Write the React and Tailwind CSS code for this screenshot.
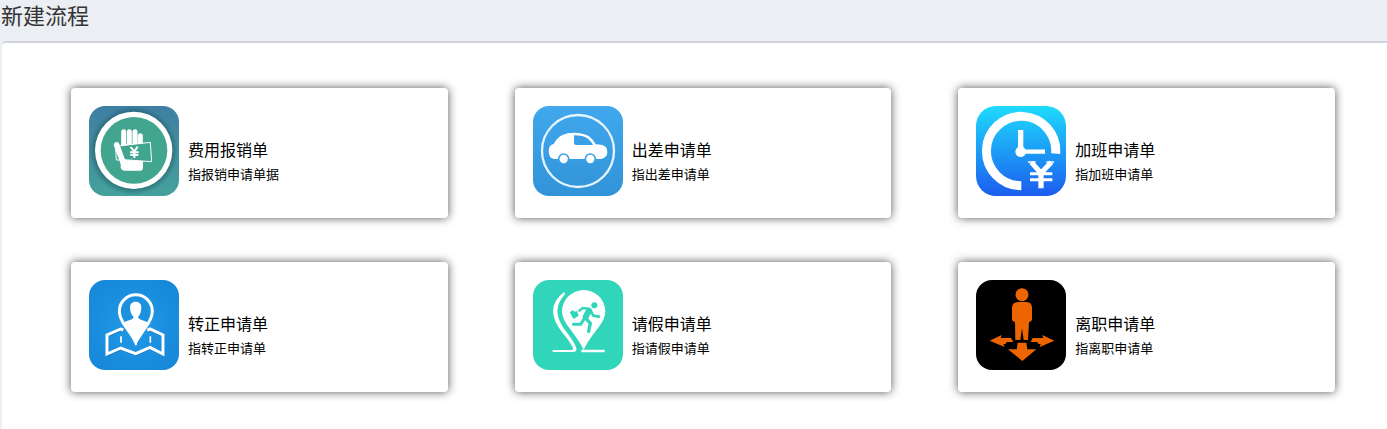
import React from "react";

function ExpenseIcon() {
  return (
    <svg className="h-full w-full" viewBox="15 15 270 270" aria-hidden="true">
      <defs>
        <linearGradient id="expenseBg" x1="0" y1="0" x2="0" y2="1">
          <stop offset="0" stopColor="#3e7fa3" />
          <stop offset="1" stopColor="#44a19c" />
        </linearGradient>
        <radialGradient id="expenseShade">
          <stop offset="0.84" stopColor="#1d5560" stopOpacity="0.6" />
          <stop offset="1" stopColor="#1d5560" stopOpacity="0" />
        </radialGradient>
      </defs>
      <rect x="15" y="15" width="270" height="270" fill="url(#expenseBg)" />
      <circle cx="148" cy="149" r="134" fill="url(#expenseShade)" />
      <circle cx="149" cy="148" r="116" fill="#fff" />
      <circle cx="150" cy="148" r="100" fill="#41a58f" />
      <g stroke="#fff" strokeWidth="15" strokeLinecap="round">
        <path d="M119 92V140M136 92V140M153 92V140M169 104V140" />
      </g>
      <path
        d="M111 130H177V200Q176 209 170 209H121Q112 209 110 199Z"
        fill="#fff"
      />
      <path
        d="M105 135L199 124L203 182L119 176Z"
        fill="#41a58f"
        stroke="#fff"
        strokeWidth="3"
      />
      <path d="M98 132L117 184" stroke="#fff" strokeWidth="17" strokeLinecap="round" />
      <path d="M95 143L97 177H106" stroke="#fff" strokeWidth="3" fill="none" />
      <path
        d="M140 138L151 152L161 137M151 152V171M138 154H164M139 162H163"
        stroke="#fff"
        strokeWidth="6"
        fill="none"
      />
    </svg>
  );
}

function TravelIcon() {
  return (
    <svg className="h-full w-full" viewBox="15 15 270 270" aria-hidden="true">
      <defs>
        <linearGradient id="travelBg" x1="0" y1="0" x2="0" y2="1">
          <stop offset="0" stopColor="#41a8ee" />
          <stop offset="1" stopColor="#3193d8" />
        </linearGradient>
      </defs>
      <rect x="15" y="15" width="270" height="270" fill="url(#travelBg)" />
      <circle cx="150" cy="150" r="108" fill="none" stroke="#e5f3fd" strokeWidth="7" />
      <path
        d="M62 150Q62 132 77 129Q85 112 103 102Q118 95 138 95Q166 95 183 106Q196 116 203 130Q226 130 234 139Q238 144 238 154Q238 170 219 174H78Q62 171 62 150Z"
        fill="#fff"
      />
      <path d="M138 103Q165 103 180 113Q190 121 195 132H144Q138 132 138 126Z" fill="#3b9fe5" />
      <g fill="#fff" stroke="#3b9fe5" strokeWidth="5">
        <circle cx="107" cy="174" r="15" />
        <circle cx="187" cy="174" r="15" />
      </g>
      <path d="M80 177H91M122 177H172M202 177H218" stroke="#3b9fe5" strokeWidth="5" />
    </svg>
  );
}

function OvertimeIcon() {
  return (
    <svg className="h-full w-full" viewBox="15 15 270 270" aria-hidden="true">
      <defs>
        <linearGradient id="overtimeBg" x1="0" y1="0" x2="0" y2="1">
          <stop offset="0" stopColor="#1fdbfc" />
          <stop offset="0.5" stopColor="#1c9cf6" />
          <stop offset="1" stopColor="#1c5cee" />
        </linearGradient>
      </defs>
      <rect x="15" y="15" width="270" height="270" rx="60" fill="url(#overtimeBg)" />
      <path
        d="M254 158A104 104 0 1 0 151 254"
        fill="none"
        stroke="#fff"
        strokeWidth="27"
      />
      <circle cx="149" cy="152" r="16" fill="#fff" />
      <path d="M149 152V87" stroke="#fff" strokeWidth="16" />
      <path d="M149 152H222" stroke="#fff" strokeWidth="13" />
      <g stroke="#fff" fill="none">
        <path d="M181 184L210 216L241 184" strokeWidth="15" />
        <path d="M210 212V262" strokeWidth="16" />
        <path d="M177 218H244M177 236H244" strokeWidth="9" />
      </g>
      <path d="M171 183H194M226 183H249" stroke="#fff" strokeWidth="4" />
    </svg>
  );
}

function RegularIcon() {
  return (
    <svg className="h-full w-full" viewBox="15 15 270 270" aria-hidden="true">
      <defs>
        <radialGradient id="regularBg" r="0.7">
          <stop offset="0" stopColor="#2299e8" />
          <stop offset="1" stopColor="#1486d6" />
        </radialGradient>
      </defs>
      <rect x="15" y="15" width="270" height="270" fill="url(#regularBg)" />
      <g transform="translate(2 3)" fill="none" stroke="#0b5f9f" strokeOpacity="0.4" strokeWidth="8">
        <path d="M118 165L110 162L69 180V237L110 219L155 236L198 217L237 237V180L198 162L190 166" />
      </g>
      <path
        d="M118 165L110 162L69 180V237L110 219L155 236L198 217L237 237V180L198 162L190 166"
        fill="none"
        stroke="#fff"
        strokeWidth="9"
      />
      <path d="M111 184V203M156 198V211M199 184V203" stroke="#fff" strokeWidth="5" />
      <path
        d="M155 202Q149 188 127 158Q106 130 106 108A49 48 0 0 1 205 108Q205 130 184 158Q163 188 155 202Z"
        fill="#1c91e0"
        stroke="#fff"
        strokeWidth="9"
      />
      <path
        d="M155 80C166 80 173 87 172 99L170 112Q168 120 163 124V129Q166 134 182 138L194 144Q188 157 174 171L155 199L137 172Q122 158 116 144L128 138Q145 134 148 129V124Q142 120 140 112L138 99C137 87 144 80 155 80Z"
        fill="#fff"
      />
    </svg>
  );
}

function LeaveIcon() {
  return (
    <svg className="h-full w-full" viewBox="15 15 270 270" aria-hidden="true">
      <rect x="15" y="15" width="270" height="270" fill="#31d5b9" />
      <path
        d="M167 225Q160 207 128 164Q101 132 102 109A64 63 0 0 1 232 109Q232 133 208 162Q174 205 167 225Z"
        fill="#fff"
      />
      <path
        d="M108 51Q76 76 75 108Q75 139 106 176Q128 203 135 219Q136 225 127 225H74V231H137Q147 230 145 220Q141 205 116 172Q88 136 88 107Q89 82 111 58Z"
        fill="#fff"
      />
      <path d="M160 228H230" stroke="#fff" strokeWidth="7" />
      <circle cx="199" cy="91" r="9" fill="#31d5b9" />
      <path d="M125 112L135 105L139 110L147 108L152 122L137 132Z" fill="#31d5b9" />
      <g fill="none" stroke="#31d5b9" strokeLinecap="round" strokeLinejoin="round">
        <path d="M154 107L164 99L180 101" strokeWidth="7" />
        <path d="M183 107L173 126" strokeWidth="18" />
        <path d="M190 111L196 122L213 125" strokeWidth="8" />
        <path d="M174 131L187 145L182 169" strokeWidth="10" />
        <path d="M168 132L158 148H136" strokeWidth="9" />
      </g>
    </svg>
  );
}

function ResignIcon() {
  return (
    <svg className="h-full w-full" viewBox="15 15 270 270" aria-hidden="true">
      <rect x="15" y="15" width="270" height="270" fill="#000" />
      <g fill="#ec6500">
        <circle cx="153" cy="59" r="19.5" />
        <path d="M141 81H166Q183 81 183 99V132Q183 139 174 141L171 195H158L153 160L148 195H133L132 141Q123 139 123 132V99Q123 81 141 81Z" />
        <path d="M56 197L92 180L89 189H120L127 201H108L103 207H97L101 216Z" />
        <path d="M250 197L214 180L217 189H185L179 201H198L203 207H209L206 216Z" />
        <path d="M140 203H166L169 223H196L154 258L111 223H137Z" />
      </g>
    </svg>
  );
}

const flows = [
  { title: "费用报销单", desc: "指报销申请单据", Icon: ExpenseIcon },
  { title: "出差申请单", desc: "指出差申请单", Icon: TravelIcon },
  { title: "加班申请单", desc: "指加班申请单", Icon: OvertimeIcon },
  { title: "转正申请单", desc: "指转正申请单", Icon: RegularIcon },
  { title: "请假申请单", desc: "指请假申请单", Icon: LeaveIcon },
  { title: "离职申请单", desc: "指离职申请单", Icon: ResignIcon },
];

function FlowCard({ title, desc, Icon }) {
  return (
    <a
      href="#"
      className="flex gap-[9px] rounded bg-white px-[18px] pt-[18px] pb-[22px] text-black shadow-[0_0_10px_#555]"
    >
      <div className="size-[90px] shrink-0 overflow-hidden rounded-2xl">
        <Icon />
      </div>
      <div className="pt-[31px]">
        <h2 className="text-base leading-6">{title}</h2>
        <p className="text-[13px] leading-[26px]">{desc}</p>
      </div>
    </a>
  );
}

export default function App() {
  return (
    <div className="flex min-h-screen flex-col bg-[#ebeef3] font-['Noto_Sans_CJK_SC',sans-serif]">
      {/* Header */}
      <header className="px-px pb-[13px]">
        <h1 className="text-[22px] leading-7 text-[#333]">新建流程</h1>
      </header>

      {/* Flow list */}
      <main className="ml-0.5 grow rounded-tl border-t-2 border-[#d2d5de] bg-white pt-[45px] pr-[52px] pb-9 pl-[69px]">
        <div className="grid grid-cols-3 gap-x-[67px] gap-y-11">
          {flows.map((flow) => (
            <FlowCard key={flow.title} {...flow} />
          ))}
        </div>
      </main>
    </div>
  );
}
